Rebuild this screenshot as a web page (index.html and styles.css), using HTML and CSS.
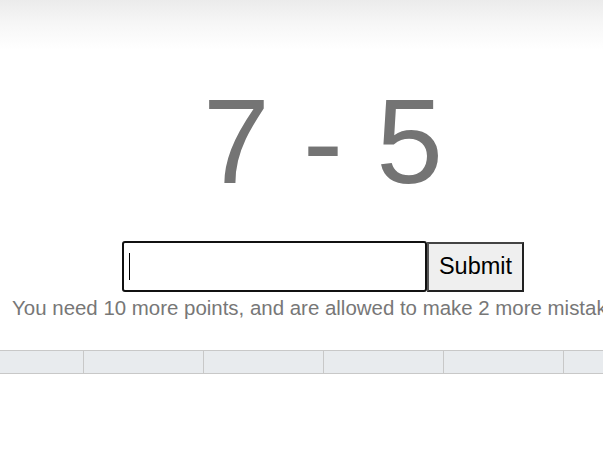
FILE: index.html
```html
<!DOCTYPE html>
<html>
<head>
<meta charset="utf-8">
<link rel="stylesheet" href="styles.css">
</head>
<body>
<div class="page">
  <div class="header"></div>
  <div class="problem">7 - 5</div>
  <form class="answer" onsubmit="return false">
    <span class="field">
      <input class="answer-input" type="text" autofocus>
      <span class="caret"></span>
    </span>
    <button class="answer-btn" type="submit">Submit</button>
  </form>
  <div class="status">You need 10 more points, and are allowed to make 2 more mistakes.</div>
  <div class="bar">
    <div class="cell"></div>
    <div class="cell"></div>
    <div class="cell"></div>
    <div class="cell"></div>
    <div class="cell"></div>
    <div class="cell"></div>
  </div>
</div>
</body>
</html>
```

FILE: styles.css
```css
html, body {
  margin: 0;
  padding: 0;
  overflow: hidden;
  background: #fff;
  font-family: "Liberation Sans", Arial, sans-serif;
}
.page {
  width: 646px;
  display: flex;
  flex-direction: column;
  align-items: center;
}
.header {
  align-self: stretch;
  height: 50px;
  background: linear-gradient(to bottom, #ebebeb 0%, #f6f6f6 45%, #ffffff 100%);
}
.problem {
  margin-top: 24px;
  font-size: 120px;
  color: #747474;
  line-height: 134px;
  white-space: nowrap;
}
.answer {
  margin: 33px 0 0;
  display: flex;
  align-items: center;
}
.field {
  position: relative;
  display: block;
}
.answer-input {
  display: block;
  box-sizing: border-box;
  width: 305px;
  height: 51px;
  border: 2px solid #111;
  border-radius: 3px;
  outline: none;
  padding: 0 6px;
  font-size: 22px;
  font-family: "Liberation Sans", Arial, sans-serif;
  background: #fff;
  caret-color: transparent;
}
.caret {
  position: absolute;
  left: 7px;
  top: 12px;
  width: 1px;
  height: 27px;
  background: #000;
}
.answer-btn {
  box-sizing: border-box;
  width: 97px;
  height: 50px;
  border: 2px solid #222;
  border-left-color: #555;
  border-top-color: #444;
  background: #efefef;
  font-size: 23.5px;
  font-family: "Liberation Sans", Arial, sans-serif;
  color: #000;
  padding: 0;
}
.status {
  margin-top: 5px;
  font-size: 20.45px;
  line-height: 22px;
  color: #777;
  white-space: nowrap;
}
.bar {
  margin-top: 31px;
  display: flex;
  width: 720px;
  flex-shrink: 0;
  border-top: 1px solid #c8c8c8;
  border-bottom: 1px solid #c8c8c8;
  background: #e8ebee;
}
.cell {
  box-sizing: border-box;
  width: 120px;
  height: 22px;
  border-left: 1px solid #c8c8c8;
}
.cell:first-child {
  border-left: none;
}
```
